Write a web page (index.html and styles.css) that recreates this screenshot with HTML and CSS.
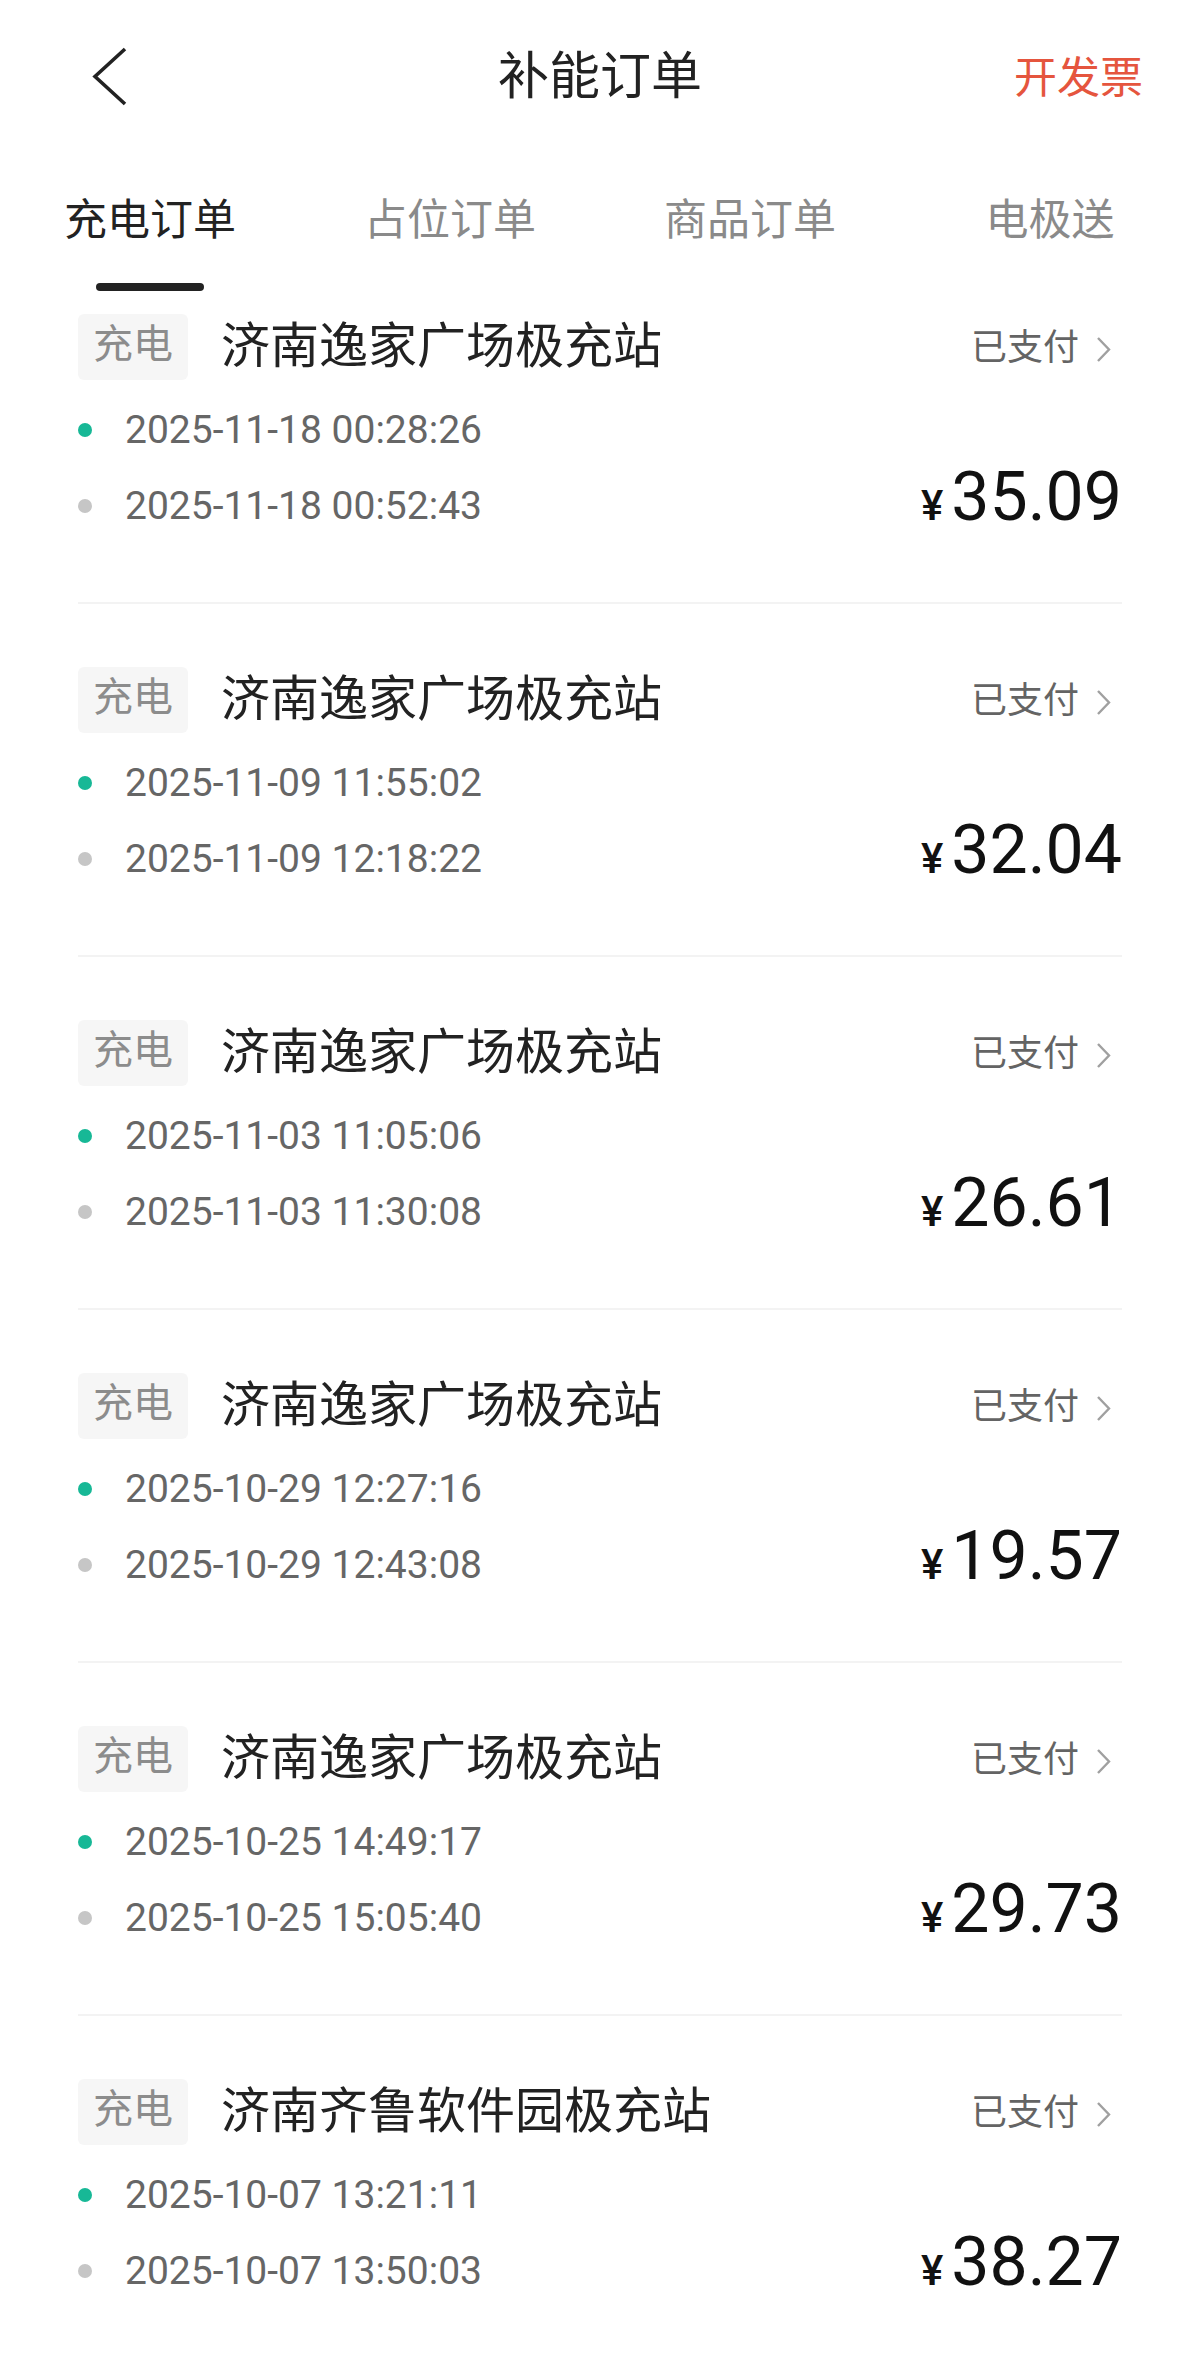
FILE: index.html
```html
<!DOCTYPE html>
<html lang="zh-CN">
<head>
<meta charset="utf-8">
<title>补能订单</title>
<link rel="stylesheet" href="styles.css">
</head>
<body>
<div class="page">
  <header class="topbar">
    <div class="back">
      <svg width="36" height="60" viewBox="0 0 36 60"><polyline points="33,2 3,29.5 33,57" fill="none" stroke="#222" stroke-width="3.6"/></svg>
    </div>
    <div class="title">补能订单</div>
    <div class="invoice">开发票</div>
  </header>

  <nav class="tabs">
    <div class="tab active"><span class="tab-text">充电订单</span><span class="bar"></span></div>
    <div class="tab"><span class="tab-text">占位订单</span></div>
    <div class="tab"><span class="tab-text">商品订单</span></div>
    <div class="tab"><span class="tab-text">电极送</span></div>
  </nav>

  <main class="list">
    <section class="card">
      <div class="head">
        <span class="tag">充电</span>
        <span class="name">济南逸家广场极充站</span>
        <span class="status">已支付<svg class="arrow" width="16" height="28" viewBox="0 0 16 28"><polyline points="2,2 13,13.5 2,25" fill="none" stroke="#a0a0a0" stroke-width="2.4"/></svg></span>
      </div>
      <div class="body">
        <div class="times">
          <div class="time"><i class="dot start"></i>2025-11-18 00:28:26</div>
          <div class="time"><i class="dot end"></i>2025-11-18 00:52:43</div>
        </div>
        <div class="amount"><span class="yen">¥</span>35.09</div>
      </div>
    </section>

    <section class="card">
      <div class="head">
        <span class="tag">充电</span>
        <span class="name">济南逸家广场极充站</span>
        <span class="status">已支付<svg class="arrow" width="16" height="28" viewBox="0 0 16 28"><polyline points="2,2 13,13.5 2,25" fill="none" stroke="#a0a0a0" stroke-width="2.4"/></svg></span>
      </div>
      <div class="body">
        <div class="times">
          <div class="time"><i class="dot start"></i>2025-11-09 11:55:02</div>
          <div class="time"><i class="dot end"></i>2025-11-09 12:18:22</div>
        </div>
        <div class="amount"><span class="yen">¥</span>32.04</div>
      </div>
    </section>

    <section class="card">
      <div class="head">
        <span class="tag">充电</span>
        <span class="name">济南逸家广场极充站</span>
        <span class="status">已支付<svg class="arrow" width="16" height="28" viewBox="0 0 16 28"><polyline points="2,2 13,13.5 2,25" fill="none" stroke="#a0a0a0" stroke-width="2.4"/></svg></span>
      </div>
      <div class="body">
        <div class="times">
          <div class="time"><i class="dot start"></i>2025-11-03 11:05:06</div>
          <div class="time"><i class="dot end"></i>2025-11-03 11:30:08</div>
        </div>
        <div class="amount"><span class="yen">¥</span>26.61</div>
      </div>
    </section>

    <section class="card">
      <div class="head">
        <span class="tag">充电</span>
        <span class="name">济南逸家广场极充站</span>
        <span class="status">已支付<svg class="arrow" width="16" height="28" viewBox="0 0 16 28"><polyline points="2,2 13,13.5 2,25" fill="none" stroke="#a0a0a0" stroke-width="2.4"/></svg></span>
      </div>
      <div class="body">
        <div class="times">
          <div class="time"><i class="dot start"></i>2025-10-29 12:27:16</div>
          <div class="time"><i class="dot end"></i>2025-10-29 12:43:08</div>
        </div>
        <div class="amount"><span class="yen">¥</span>19.57</div>
      </div>
    </section>

    <section class="card">
      <div class="head">
        <span class="tag">充电</span>
        <span class="name">济南逸家广场极充站</span>
        <span class="status">已支付<svg class="arrow" width="16" height="28" viewBox="0 0 16 28"><polyline points="2,2 13,13.5 2,25" fill="none" stroke="#a0a0a0" stroke-width="2.4"/></svg></span>
      </div>
      <div class="body">
        <div class="times">
          <div class="time"><i class="dot start"></i>2025-10-25 14:49:17</div>
          <div class="time"><i class="dot end"></i>2025-10-25 15:05:40</div>
        </div>
        <div class="amount"><span class="yen">¥</span>29.73</div>
      </div>
    </section>

    <section class="card">
      <div class="head">
        <span class="tag">充电</span>
        <span class="name">济南齐鲁软件园极充站</span>
        <span class="status">已支付<svg class="arrow" width="16" height="28" viewBox="0 0 16 28"><polyline points="2,2 13,13.5 2,25" fill="none" stroke="#a0a0a0" stroke-width="2.4"/></svg></span>
      </div>
      <div class="body">
        <div class="times">
          <div class="time"><i class="dot start"></i>2025-10-07 13:21:11</div>
          <div class="time"><i class="dot end"></i>2025-10-07 13:50:03</div>
        </div>
        <div class="amount"><span class="yen">¥</span>38.27</div>
      </div>
    </section>
  </main>
</div>
</body>
</html>
```

FILE: styles.css
```css
html, body {
  margin: 0;
  padding: 0;
  background: #ffffff;
}
body {
  font-family: Roboto, "Noto Sans CJK SC", sans-serif;
  color: #222222;
}
.page {
  width: 1200px;
  height: 2364px;
  overflow: hidden;
}

/* top bar */
.topbar {
  height: 154px;
  display: grid;
  grid-template-columns: 1fr auto 1fr;
  align-items: center;
}
.back {
  padding-left: 92px;
  display: flex;
  align-items: center;
  margin-top: -1px;
}
.back svg { display: block; }
.title {
  font-size: 51px;
  line-height: 60px;
  color: #222222;
  margin-top: 0;
}
.invoice {
  justify-self: end;
  padding-right: 57px;
  font-size: 43px;
  line-height: 60px;
  color: #e5553e;
  margin-top: 2px;
}

/* tabs */
.tabs {
  display: flex;
}
.tab {
  width: 300px;
  display: flex;
  flex-direction: column;
  align-items: center;
  padding-top: 36px;
}
.tab-text {
  font-size: 43px;
  line-height: 60px;
  color: #8a8a8a;
}
.tab.active .tab-text { color: #222222; }
.tab .bar {
  display: block;
  width: 108px;
  height: 8px;
  border-radius: 4px;
  background: #222222;
  margin-top: 33px;
}

/* list */
.list {
  padding: 0 78px;
}
.card {
  padding-top: 63px;
  border-bottom: 2px solid #f3f3f3;
}
.card:first-child { padding-top: 23px; }

.head {
  height: 66px;
  display: flex;
  align-items: center;
}
.tag {
  width: 110px;
  height: 66px;
  border-radius: 6px;
  background: #f6f6f6;
  color: #8c8c8c;
  font-size: 40px;
  line-height: 60px;
  display: flex;
  align-items: center;
  justify-content: center;
  padding-bottom: 4px;
  box-sizing: border-box;
}
.name {
  margin-left: 33px;
  font-size: 49px;
  line-height: 60px;
  color: #222222;
  flex: 1;
  margin-top: -1px;
}
.status {
  display: flex;
  align-items: center;
  font-size: 36px;
  line-height: 50px;
  color: #646464;
  padding-right: 10px;
  margin-top: 1px;
}
.status .arrow {
  display: block;
  margin-left: 17px;
  margin-top: 4px;
}

.body {
  display: flex;
  justify-content: space-between;
  align-items: flex-start;
  height: 222px;
}
.times {
  padding-top: 12px;
}
.time {
  height: 76px;
  display: flex;
  align-items: center;
  font-size: 39px;
  line-height: 76px;
  color: #666666;
}
.dot {
  display: block;
  width: 14px;
  height: 14px;
  border-radius: 50%;
  margin: 0 33px 0 0;
}
.dot.start { background: #17b896; }
.dot.end { background: #c6c6c6; }

.amount {
  margin-top: 83px;
  font-size: 68px;
  line-height: 68px;
  color: #111111;
  display: flex;
  align-items: baseline;
}
.yen {
  font-size: 42px;
  font-weight: 500;
  margin-right: 8px;
}
```
